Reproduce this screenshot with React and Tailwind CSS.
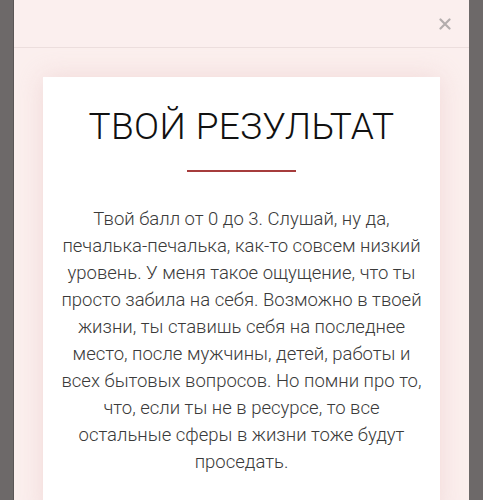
import React from 'react';

const lines = [
  'Твой балл от 0 до 3. Слушай, ну да,',
  'печалька-печалька, как-то совсем низкий',
  'уровень. У меня такое ощущение, что ты',
  'просто забила на себя. Возможно в твоей',
  'жизни, ты ставишь себя на последнее',
  'место, после мужчины, детей, работы и',
  'всех бытовых вопросов. Но помни про то,',
  'что, если ты не в ресурсе, то все',
  'остальные сферы в жизни тоже будут',
  'проседать.',
];

export default function App() {
  return (
    <div className="h-[500px] w-full overflow-hidden bg-[#6d6969] flex justify-start" style={{ fontFamily: 'Roboto, "Noto Sans", sans-serif' }}>
      <div className="ml-[13px] w-[456px] h-full bg-[#fbefee] border-l border-[#5a5656] flex flex-col">
        {/* modal header */}
        <div className="h-[48px] shrink-0 border-b border-[#ecdedd] flex items-center justify-end pr-[18px]">
          <button className="w-[13px] h-[13px] flex items-center justify-center">
            <svg width="12" height="12" viewBox="0 0 12 12">
              <path d="M1.5 1.5L10.5 10.5M10.5 1.5L1.5 10.5" stroke="#b3adad" strokeWidth="2.2" strokeLinecap="round" />
            </svg>
          </button>
        </div>

        <div className="px-[29px] pt-[29px]">
          <div className="bg-white shadow-[0_0_24px_rgba(230,190,188,0.45)] pt-[28px] pb-10 flex flex-col items-center">
            <h2 className="text-[37px] leading-[44px] font-light text-[#111] tracking-[0.4px]">ТВОЙ РЕЗУЛЬТАТ</h2>
            <div className="mt-[21px] w-[109px] h-[2px] bg-[#a63c3c]" />
            <div className="mt-[34px] text-[18.5px] leading-[27px] font-light text-[#3a3a3a] text-center">
              {lines.map((l) => (
                <div key={l} className="whitespace-nowrap">{l}</div>
              ))}
            </div>
          </div>
        </div>
      </div>
    </div>
  );
}
